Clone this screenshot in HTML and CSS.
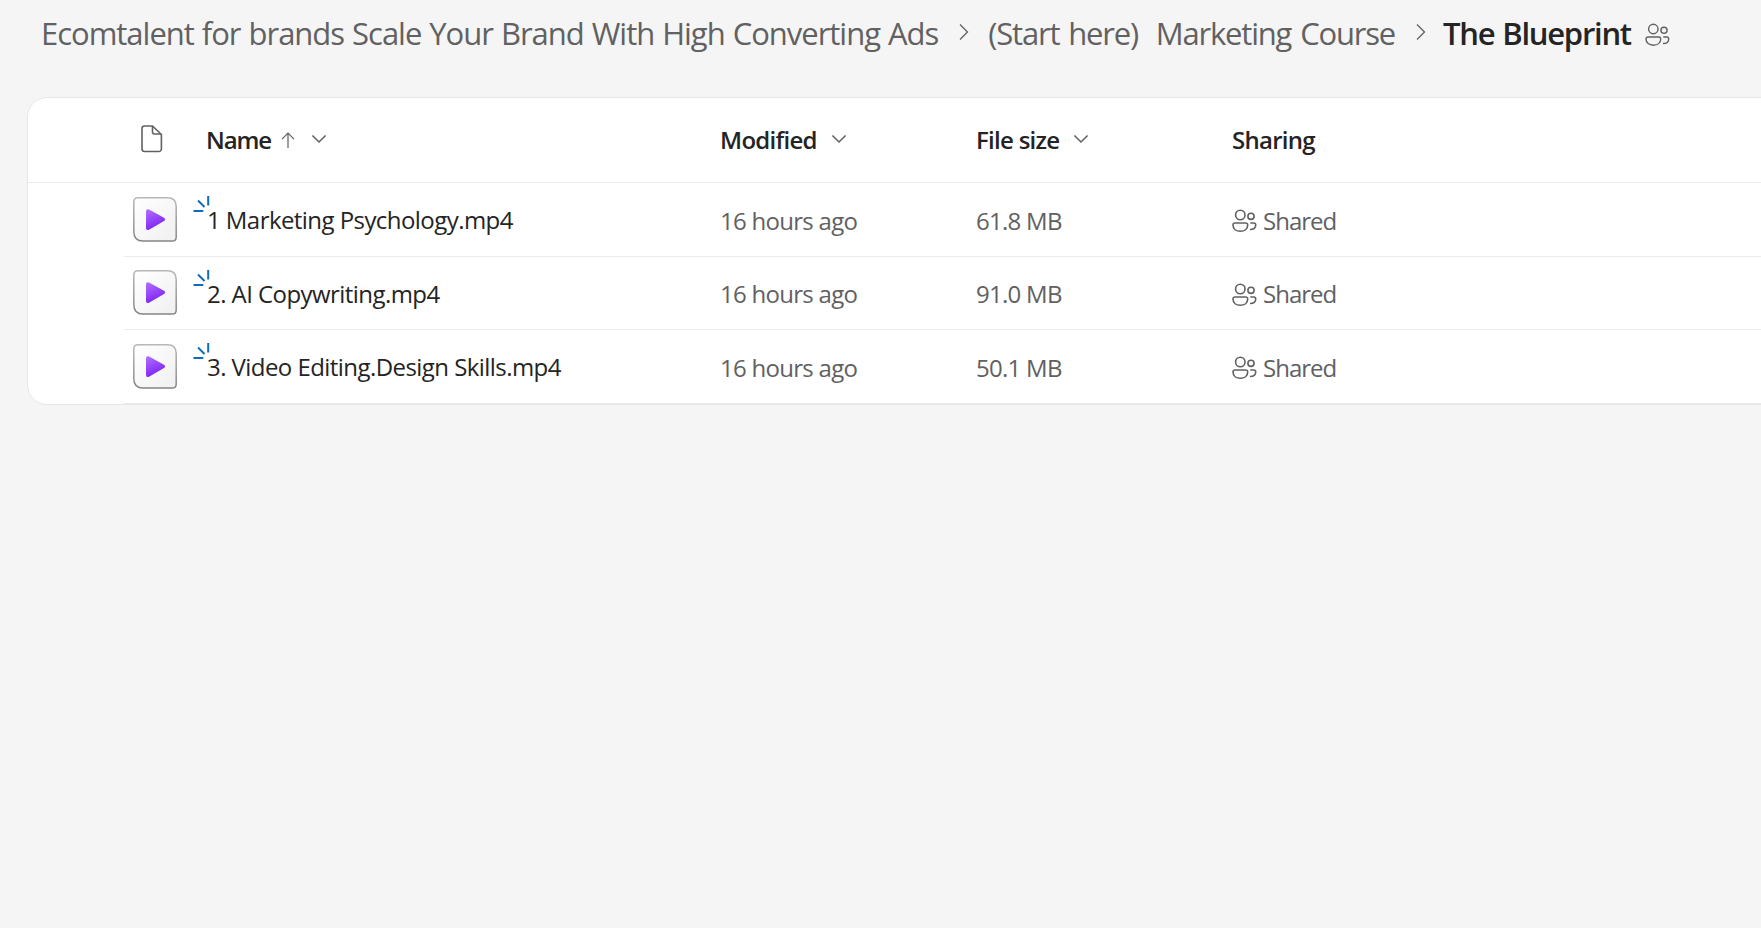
FILE: index.html
```
<!DOCTYPE html>
<html lang="en">
<head>
    <meta charset="UTF-8">
    <title>The Blueprint</title>
    <link rel="stylesheet" href="styles.css">
</head>
<body>
<svg class="sprite">
    <defs>
        <linearGradient id="play-fill" x1="0" y1="0" x2="0.4" y2="1">
            <stop offset="0" stop-color="#b070ff"/>
            <stop offset="1" stop-color="#7f22f5"/>
        </linearGradient>
        <linearGradient id="tile-fill" x1="0" y1="0" x2="1" y2="1">
            <stop offset="0" stop-color="#ffffff"/>
            <stop offset="1" stop-color="#f0f0f0"/>
        </linearGradient>
        <linearGradient id="tile-line" x1="0" y1="0" x2="0" y2="1">
            <stop offset="0" stop-color="#b8b8b8"/>
            <stop offset="1" stop-color="#858585"/>
        </linearGradient>
    </defs>
    <symbol id="people" viewBox="0 0 26 26">
        <circle cx="9.3" cy="7" r="4.7"/>
        <circle cx="20" cy="8.3" r="3.1"/>
        <path d="M3.9 15H14.8a1.9 1.9 0 0 1 1.9 1.9c0 4-3.2 6.3-7.35 6.3S2 20.9 2 16.9A1.9 1.9 0 0 1 3.9 15z"/>
        <path d="M19.3 15h3.5a1.9 1.9 0 0 1 1.9 1.9c0 2.9-2.1 4.6-5.7 4.6"/>
    </symbol>
    <symbol id="down" viewBox="0 0 16 10">
        <path d="M1.4 1.5L8 8l6.6-6.5"/>
    </symbol>
    <symbol id="right" viewBox="0 0 10 18">
        <path d="M1 1.5L8.5 9 1 16.5"/>
    </symbol>
    <symbol id="video" viewBox="0 0 44 45">
        <path d="M5 .8H34.5Q43.2 .8 43.2 9.5V40Q43.2 44.1 39.2 44.1H10Q.8 44.1 .8 34.5V5Q.8 .8 5 .8z" fill="url(#tile-fill)" stroke="url(#tile-line)" stroke-width="1.5"/>
        <path d="M13 14.5Q13 11.3 16 12.6L31 20.7Q33.2 22.3 31 24L16 32.7Q13 34 13 30.8z" fill="url(#play-fill)"/>
    </symbol>
    <symbol id="new" viewBox="0 0 18 18">
        <path d="M15.2 1v9.5M5 5.5l6.5 6.5M.5 16h9.8"/>
    </symbol>
</svg>

<nav class="breadcrumb">
    <span class="crumb">Ecomtalent for brands Scale Your Brand With High Converting Ads</span>
    <svg class="separator"><use href="#right"/></svg>
    <span class="crumb parent">(Start here)&nbsp; Marketing Course</span>
    <svg class="separator"><use href="#right"/></svg>
    <span class="crumb current">The Blueprint</span>
    <svg class="people"><use href="#people"/></svg>
</nav>

<main class="list">
    <div class="row head">
        <div class="type">
            <svg class="doc" viewBox="0 0 24 30">
                <path d="M4.5 2H12.5L21.4 10.5V25A2.5 2.5 0 0 1 18.9 27.5H4.5A2.5 2.5 0 0 1 2 25V4.5A2.5 2.5 0 0 1 4.5 2z"/>
                <path d="M12.5 2V8A2 2 0 0 0 14.5 10H21.4"/>
            </svg>
        </div>
        <div class="cell">
            <span class="label tight">Name</span>
            <svg class="up" viewBox="0 0 14 17"><path d="M7 16V1.5M1 7.2L7 1.2l6 6"/></svg>
            <svg class="down"><use href="#down"/></svg>
        </div>
        <div class="cell"><span class="label">Modified</span><svg class="down"><use href="#down"/></svg></div>
        <div class="cell"><span class="label">File size</span><svg class="down"><use href="#down"/></svg></div>
        <div class="cell"><span class="label">Sharing</span></div>
    </div>
    <div class="row">
        <div class="type"><svg class="video"><use href="#video"/></svg></div>
        <div class="cell name"><svg class="new"><use href="#new"/></svg><span>1 Marketing Psychology.mp4</span></div>
        <div class="cell">16 hours ago</div>
        <div class="cell">61.8 MB</div>
        <div class="cell shared"><svg class="people"><use href="#people"/></svg>Shared</div>
    </div>
    <div class="row">
        <div class="type"><svg class="video"><use href="#video"/></svg></div>
        <div class="cell name"><svg class="new"><use href="#new"/></svg><span>2. AI Copywriting.mp4</span></div>
        <div class="cell">16 hours ago</div>
        <div class="cell">91.0 MB</div>
        <div class="cell shared"><svg class="people"><use href="#people"/></svg>Shared</div>
    </div>
    <div class="row">
        <div class="type"><svg class="video"><use href="#video"/></svg></div>
        <div class="cell name"><svg class="new"><use href="#new"/></svg><span>3. Video Editing.Design Skills.mp4</span></div>
        <div class="cell">16 hours ago</div>
        <div class="cell">50.1 MB</div>
        <div class="cell shared"><svg class="people"><use href="#people"/></svg>Shared</div>
    </div>
</main>
</body>
</html>
```
FILE: styles.css
```
html * {
    box-sizing: border-box;
}

body {
    margin: 0;
    background: #f5f5f5;
    color: #616161;
    font-family: "Open Sans", "Noto Sans", sans-serif;
    font-size: 24px;
    overflow: hidden;
}

svg {
    display: block;
    flex: none;
    fill: none;
    stroke: #616161;
    stroke-width: 1.6;
}

.sprite {
    width: 0;
    height: 0;
}

.breadcrumb {
    display: flex;
    align-items: center;
    height: 97px;
    padding: 0 0 31px 41px;
    font-size: 31px;
    letter-spacing: -1.02px;
    word-spacing: 1px;
    white-space: nowrap;
}

.separator {
    width: 10px;
    height: 18px;
    margin: 0 19px 3px 21px;
    stroke-width: 1.3;
}

.parent {
    letter-spacing: -1.18px;
    word-spacing: 2px;
}

.current {
    margin-left: -2px;
    color: #242424;
    font-weight: 600;
    letter-spacing: -1.25px;
}

.breadcrumb .people {
    margin: 3px 0 0 13px;
    stroke-width: 1.4;
}

.people {
    width: 26px;
    height: 26px;
}

.list {
    width: 1780px;
    margin-left: 27px;
    background: #fff;
    border: 1px solid #e6e6e6;
    border-radius: 20px;
}

.row {
    display: grid;
    grid-template-columns: 83px 513px 256px 256px 1fr;
    height: 73.5px;
    margin-left: 96px;
    border-bottom: 1px solid #ebebeb;
}

.head {
    height: 85px;
    margin-left: 0;
    padding-left: 96px;
    color: #242424;
    font-weight: 600;
}

.type,
.cell {
    display: flex;
    align-items: center;
    white-space: nowrap;
}

.cell {
    padding-top: 2px;
    letter-spacing: -.72px;
}

.head .cell {
    padding-top: 0;
}

.label {
    padding-bottom: 2px;
}

.tight {
    margin-left: -1px;
    letter-spacing: -1.1px;
}

.type {
    padding-left: 9px;
}

.head .type {
    padding: 0 0 2px 16px;
}

.doc {
    width: 24px;
    height: 30px;
}

.video {
    width: 44px;
    height: 45px;
    stroke: none;
}

.up {
    width: 14px;
    height: 17px;
    margin-left: 10px;
    stroke-width: 1.2;
}

.down {
    width: 16px;
    height: 10px;
    margin: 0 0 3px 14px;
}

.up + .down {
    margin-left: 16px;
}

.name {
    position: relative;
    padding-top: 1px;
    color: #242424;
    letter-spacing: -.56px;
}

/* the "new" mark hangs over the first letter */
.new {
    position: absolute;
    left: -14px;
    top: 12px;
    width: 18px;
    height: 18px;
    stroke: #0f6cbd;
    stroke-width: 2;
}

.shared {
    gap: 6px;
    letter-spacing: -1px;
}

.shared .people {
    margin: 2px 0 0 -1px;
}
```
